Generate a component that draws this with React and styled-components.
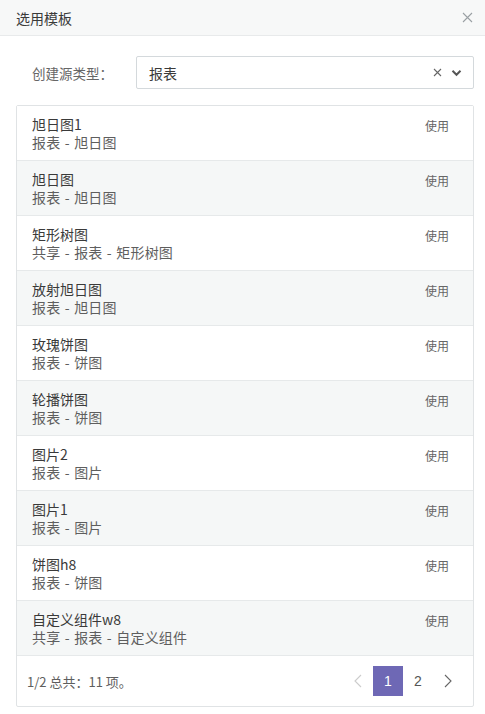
import React from 'react'
import styled, { createGlobalStyle } from 'styled-components'

const GlobalStyle = createGlobalStyle`
  html, body {
    margin: 0;
    padding: 0;
    background: #fff;
  }
  body {
    font-family: "Noto Sans CJK SC", "Noto Sans", sans-serif;
    color: #333;
  }
`

const items = [
  { name: '旭日图1', path: '报表 - 旭日图' },
  { name: '旭日图', path: '报表 - 旭日图' },
  { name: '矩形树图', path: '共享 - 报表 - 矩形树图' },
  { name: '放射旭日图', path: '报表 - 旭日图' },
  { name: '玫瑰饼图', path: '报表 - 饼图' },
  { name: '轮播饼图', path: '报表 - 饼图' },
  { name: '图片2', path: '报表 - 图片' },
  { name: '图片1', path: '报表 - 图片' },
  { name: '饼图h8', path: '报表 - 饼图' },
  { name: '自定义组件w8', path: '共享 - 报表 - 自定义组件' },
]

function App() {
  return (
    <>
      <GlobalStyle />
      <Dialog>
        <Header>
          <Title>选用模板</Title>
          <CloseBtn>
            <svg width="11" height="11" viewBox="0 0 11 11">
              <path d="M1 1L10 10M10 1L1 10" stroke="#9aa0a4" strokeWidth="1.1" fill="none" />
            </svg>
          </CloseBtn>
        </Header>

        <Body>
          <FormRow>
            <Label>创建源类型：</Label>
            <Select>
              <SelectValue>报表</SelectValue>
              <SelectIcons>
                <svg width="9" height="9" viewBox="0 0 9 9">
                  <path d="M1 1L8 8M8 1L1 8" stroke="#666" strokeWidth="1.1" fill="none" />
                </svg>
                <svg width="11" height="8" viewBox="0 0 11 8">
                  <path d="M1.5 1.8L5.5 5.8L9.5 1.8" stroke="#555" strokeWidth="2" fill="none" />
                </svg>
              </SelectIcons>
            </Select>
          </FormRow>

          <ListBox>
            {items.map((it, i) => (
              <Row key={i} $odd={i % 2 === 1}>
                <RowText>
                  <RowName>{it.name}</RowName>
                  <RowPath>{it.path}</RowPath>
                </RowText>
                <UseLink>使用</UseLink>
              </Row>
            ))}
            <Footer>
              <Total>1/2 总共：11 项。</Total>
              <Pager>
                <PageArrow $disabled>
                  <svg width="8" height="14" viewBox="0 0 8 14">
                    <path d="M7 1L1 7L7 13" stroke="#ccc" strokeWidth="1.1" fill="none" />
                  </svg>
                </PageArrow>
                <PageNum $active>1</PageNum>
                <PageNum>2</PageNum>
                <PageArrow>
                  <svg width="8" height="14" viewBox="0 0 8 14">
                    <path d="M1 1L7 7L1 13" stroke="#666" strokeWidth="1.1" fill="none" />
                  </svg>
                </PageArrow>
              </Pager>
            </Footer>
          </ListBox>
        </Body>
      </Dialog>
    </>
  )
}

export default App

const Dialog = styled.div`
  width: 485px;
  height: 714px;
  background: #fff;
  display: flex;
  flex-direction: column;
`

const Header = styled.div`
  height: 35px;
  background: #f7f8f8;
  border-bottom: 1px solid #e8eaeb;
  display: flex;
  align-items: center;
  justify-content: space-between;
  padding: 0 12px 0 16px;
`

const Title = styled.div`
  font-size: 14px;
  color: #3a3a3a;
`

const CloseBtn = styled.div`
  display: flex;
  align-items: center;
`

const Body = styled.div`
  padding: 20px 11px 0 16px;
`

const FormRow = styled.div`
  display: flex;
  align-items: center;
  margin-bottom: 16px;
`

const Label = styled.div`
  width: 120px;
  box-sizing: border-box;
  padding-left: 16px;
  font-size: 13.5px;
  color: #666;
`

const Select = styled.div`
  flex: 1;
  height: 33px;
  box-sizing: border-box;
  border: 1px solid #d4d9dc;
  border-radius: 2px;
  display: flex;
  align-items: center;
  justify-content: space-between;
  padding: 0 11px 0 12px;
`

const SelectValue = styled.div`
  font-size: 14px;
  color: #3a3a3a;
`

const SelectIcons = styled.div`
  display: flex;
  align-items: center;
  gap: 9px;
`

const ListBox = styled.div`
  border: 1px solid #e0e3e5;
  border-radius: 2px;
  display: flex;
  flex-direction: column;
`

const Row = styled.div`
  height: 55px;
  box-sizing: border-box;
  border-bottom: 1px solid #e6e9ea;
  background: ${p => (p.$odd ? '#f5f7f7' : '#fff')};
  display: flex;
  justify-content: space-between;
  align-items: flex-start;
  padding: 9px 24px 0 15px;
`

const RowText = styled.div`
  display: flex;
  flex-direction: column;
`

const RowName = styled.div`
  font-size: 14px;
  line-height: 18px;
  height: 18px;
  color: #3a3a3a;
`

const RowPath = styled.div`
  font-size: 14px;
  line-height: 18px;
  height: 18px;
  letter-spacing: 0.2px;
  word-spacing: 1px;
  color: #5e5e5e;
`

const UseLink = styled.div`
  font-size: 12px;
  line-height: 16px;
  color: #666;
  margin-top: 3px;
  cursor: pointer;
`

const Footer = styled.div`
  height: 50px;
  display: flex;
  align-items: center;
  justify-content: space-between;
  padding: 0 10px 0 10px;
`

const Total = styled.div`
  font-size: 13px;
  color: #5e5e5e;
`

const Pager = styled.div`
  display: flex;
  align-items: center;
`

const PageArrow = styled.div`
  width: 30px;
  height: 30px;
  display: flex;
  align-items: center;
  justify-content: center;
  cursor: ${p => (p.$disabled ? 'default' : 'pointer')};
`

const PageNum = styled.div`
  width: 30px;
  height: 30px;
  display: flex;
  align-items: center;
  justify-content: center;
  font-size: 14px;
  font-family: "Liberation Sans", Arial, sans-serif;
  background: ${p => (p.$active ? '#6e68b5' : 'transparent')};
  color: ${p => (p.$active ? '#fff' : '#555')};
`
